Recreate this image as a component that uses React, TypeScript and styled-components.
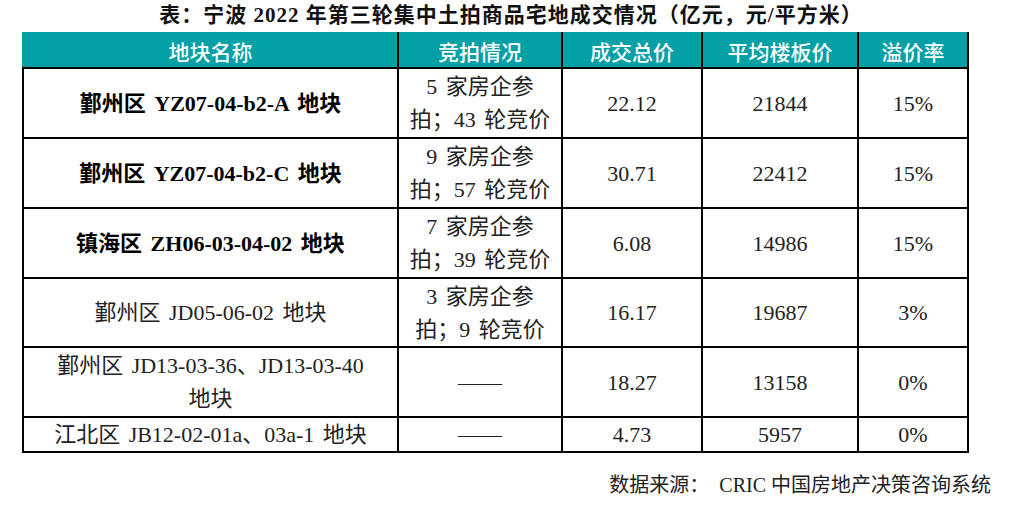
import React from "react";
import styled, { createGlobalStyle } from "styled-components";

const Global = createGlobalStyle`
  html, body { margin: 0; padding: 0; background: #ffffff; }
  body { width: 1022px; height: 510px; overflow: hidden; }
`;

const Page = styled.div`
  width: 1022px;
  height: 510px;
  display: flex;
  flex-direction: column;
  font-family: "Liberation Serif", "Noto Sans CJK SC", serif;
  color: #111;
`;

const Title = styled.div`
  height: 32px;
  line-height: 30px;
  text-align: center;
  font-size: 21px;
  font-weight: 700;
  letter-spacing: 1px;
  color: #111;
  white-space: pre;
`;

const TableWrap = styled.div`
  padding-left: 22px;
`;

const Table = styled.table`
  width: 945px;
  table-layout: fixed;
  border-collapse: collapse;
  border: 2px solid #000;
`;

const HeadRow = styled.tr`
  height: 35px;
`;

const HeadCell = styled.th<{ $first?: boolean }>`
  background: #03a0a6;
  color: #fff;
  font-family: "Noto Sans CJK SC", sans-serif;
  font-weight: 500;
  font-size: 21px;
  line-height: 28px;
  padding: 0;
  text-align: center;
  border: 2px solid #000;
  border-top-color: #03a0a6;
  ${(p) => (p.$first ? "border-left-color: #03a0a6;" : "")}
`;

const Row = styled.tr<{ $h: number }>`
  height: ${(p) => p.$h}px;
`;

const Cell = styled.td<{ $bold?: boolean }>`
  border: 2px solid #000;
  padding: 0;
  text-align: center;
  vertical-align: middle;
  font-size: 22px;
  line-height: 33px;
  word-spacing: 3px;
  font-weight: ${(p) => (p.$bold ? 700 : 400)};
  color: ${(p) => (p.$bold ? "#000" : "#222")};
  white-space: nowrap;
`;

const Source = styled.div`
  margin-top: 17px;
  padding-right: 31px;
  text-align: right;
  font-size: 20px;
  line-height: 30px;
  color: #222;
  white-space: pre;
`;

type RowData = {
  name: React.ReactNode;
  bold?: boolean;
  bid: React.ReactNode;
  total: string;
  price: string;
  rate: string;
  h: number;
};

const rows: RowData[] = [
  {
    name: "鄞州区 YZ07-04-b2-A 地块",
    bold: true,
    bid: (
      <>
        5 家房企参
        <br />
        拍；43 轮竞价
      </>
    ),
    total: "22.12",
    price: "21844",
    rate: "15%",
    h: 70,
  },
  {
    name: "鄞州区 YZ07-04-b2-C 地块",
    bold: true,
    bid: (
      <>
        9 家房企参
        <br />
        拍；57 轮竞价
      </>
    ),
    total: "30.71",
    price: "22412",
    rate: "15%",
    h: 70,
  },
  {
    name: "镇海区 ZH06-03-04-02 地块",
    bold: true,
    bid: (
      <>
        7 家房企参
        <br />
        拍；39 轮竞价
      </>
    ),
    total: "6.08",
    price: "14986",
    rate: "15%",
    h: 70,
  },
  {
    name: "鄞州区 JD05-06-02 地块",
    bid: (
      <>
        3 家房企参
        <br />
        拍；9 轮竞价
      </>
    ),
    total: "16.17",
    price: "19687",
    rate: "3%",
    h: 69,
  },
  {
    name: (
      <>
        鄞州区 JD13-03-36、JD13-03-40
        <br />
        地块
      </>
    ),
    bid: "——",
    total: "18.27",
    price: "13158",
    rate: "0%",
    h: 70,
  },
  {
    name: "江北区 JB12-02-01a、03a-1 地块",
    bid: "——",
    total: "4.73",
    price: "5957",
    rate: "0%",
    h: 35,
  },
];

const widths = [375, 164, 140, 156, 110];

export default function App() {
  return (
    <Page>
      <Global />
      <Title>表：宁波 2022 年第三轮集中土拍商品宅地成交情况（亿元，元/平方米）</Title>
      <TableWrap>
        <Table>
          <colgroup>
            {widths.map((w, i) => (
              <col key={i} style={{ width: w }} />
            ))}
          </colgroup>
          <thead>
            <HeadRow>
              <HeadCell $first>地块名称</HeadCell>
              <HeadCell>竞拍情况</HeadCell>
              <HeadCell>成交总价</HeadCell>
              <HeadCell>平均楼板价</HeadCell>
              <HeadCell>溢价率</HeadCell>
            </HeadRow>
          </thead>
          <tbody>
            {rows.map((r, i) => (
              <Row key={i} $h={r.h}>
                <Cell $bold={r.bold}>{r.name}</Cell>
                <Cell>{r.bid}</Cell>
                <Cell>{r.total}</Cell>
                <Cell>{r.price}</Cell>
                <Cell>{r.rate}</Cell>
              </Row>
            ))}
          </tbody>
        </Table>
      </TableWrap>
      <Source>数据来源：  CRIC 中国房地产决策咨询系统</Source>
    </Page>
  );
}
